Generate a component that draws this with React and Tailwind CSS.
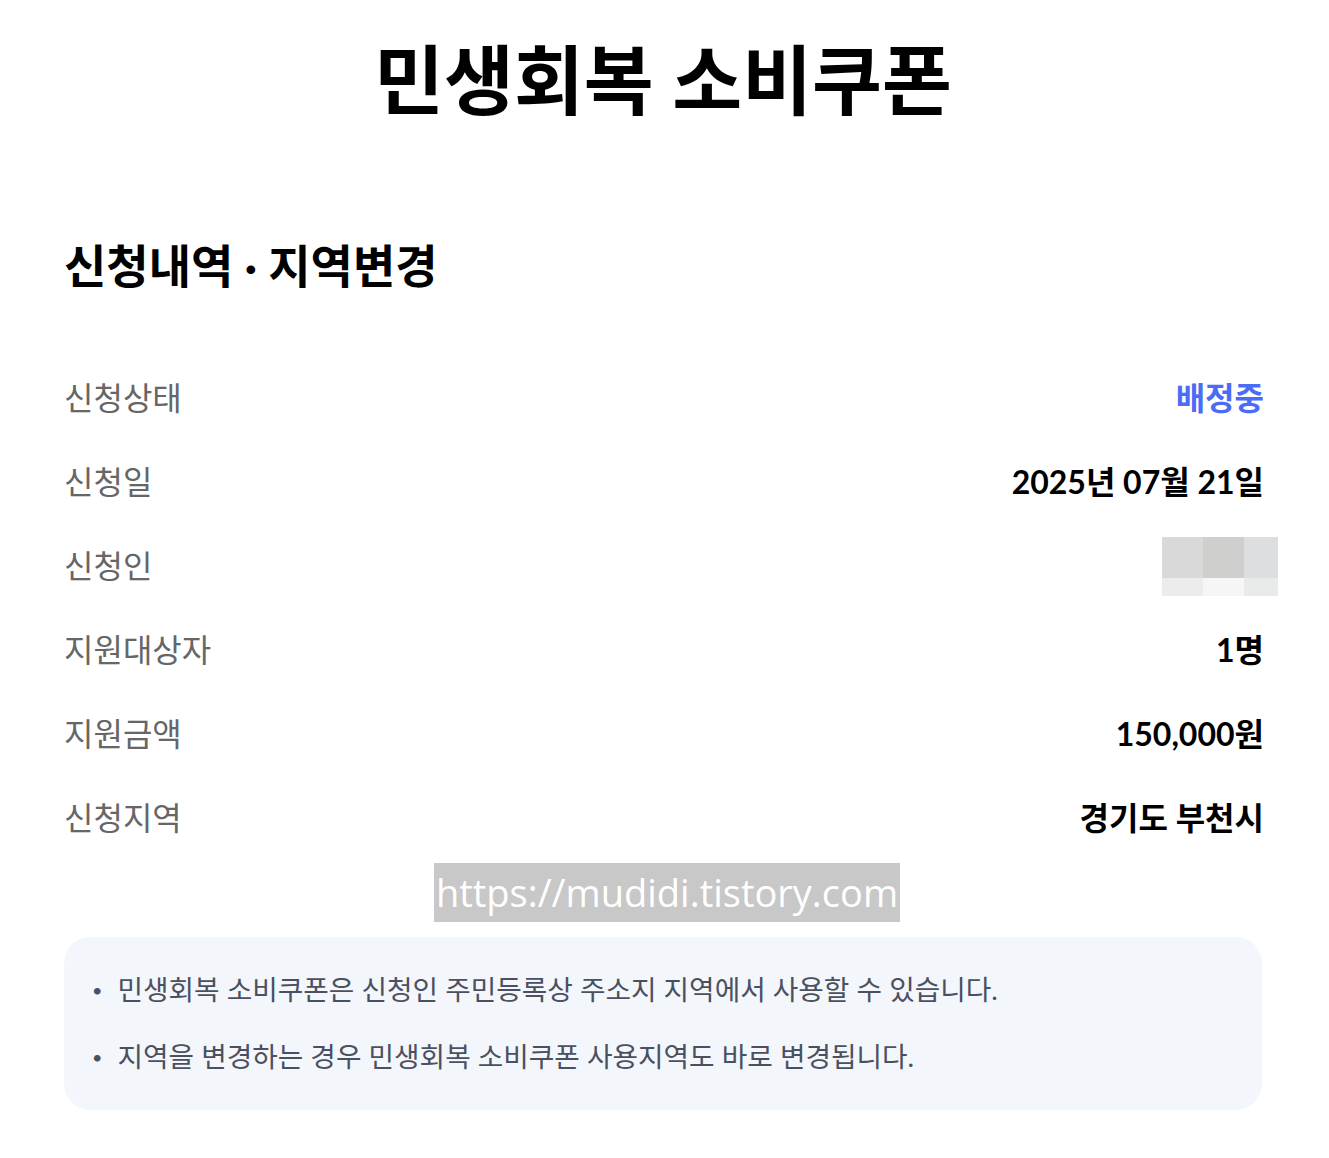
import React from "react";

const rows = [
  { label: "신청상태", value: "배정중", blue: true },
  { label: "신청일", value: "2025년 07월 21일" },
  { label: "신청인", value: null },
  { label: "지원대상자", value: "1명" },
  { label: "지원금액", value: "150,000원" },
  { label: "신청지역", value: "경기도 부천시" },
];

function Blurred() {
  return (
    <div className="grid grid-cols-[41px_41px_34px] grid-rows-[41px_18px] -mr-[14px]">
      <div className="bg-[#d9d9d9]" />
      <div className="bg-[#cfcfcd]" />
      <div className="bg-[#dddee0]" />
      <div className="bg-[#ececec]" />
      <div className="bg-[#f6f6f6]" />
      <div className="bg-[#e9eaea]" />
    </div>
  );
}

export default function App() {
  return (
    <div className="min-h-screen bg-white pl-16 pr-[67px] text-black" style={{ fontFamily: 'Lato, "Noto Sans CJK KR", sans-serif' }}>
      <h1 className="pt-[30px] text-center text-[76px] font-bold leading-[100px]">민생회복 소비쿠폰</h1>

      <h2 className="mt-[108px] text-[46px] font-bold leading-[56px]">신청내역 · 지역변경</h2>

      <div className="-mr-[2px] mt-[62px] flex flex-col">
        {rows.map((r) => (
          <div key={r.label} className="flex h-[84px] items-center justify-between">
            <span className="text-[32px] text-[#666666]">{r.label}</span>
            {r.value === null ? (
              <Blurred />
            ) : (
              <span className={"text-[32px] font-bold " + (r.blue ? "text-[#4a6cf7]" : "text-black")}>{r.value}</span>
            )}
          </div>
        ))}
      </div>

      <div className="ml-[8px] mt-[3px] flex justify-center">
        <span className="bg-[#c8c8c8] px-[2px] text-[38px] leading-[59px] text-white" style={{ fontFamily: '"Open Sans", sans-serif' }}>
          https://mudidi.tistory.com
        </span>
      </div>

      <div className="mt-[15px] rounded-[26px] bg-[#f3f6fb] pl-[28px] pr-[20px] py-[35px]">
        <ul className="flex flex-col gap-[31px] text-[27.75px] leading-[36px] text-[#4b5060]">
          <li className="flex items-center gap-[15px]">
            <span className="text-[18px]">•</span>
            <span>민생회복 소비쿠폰은 신청인 주민등록상 주소지 지역에서 사용할 수 있습니다.</span>
          </li>
          <li className="flex items-center gap-[15px]">
            <span className="text-[18px]">•</span>
            <span>지역을 변경하는 경우 민생회복 소비쿠폰 사용지역도 바로 변경됩니다.</span>
          </li>
        </ul>
      </div>
    </div>
  );
}
